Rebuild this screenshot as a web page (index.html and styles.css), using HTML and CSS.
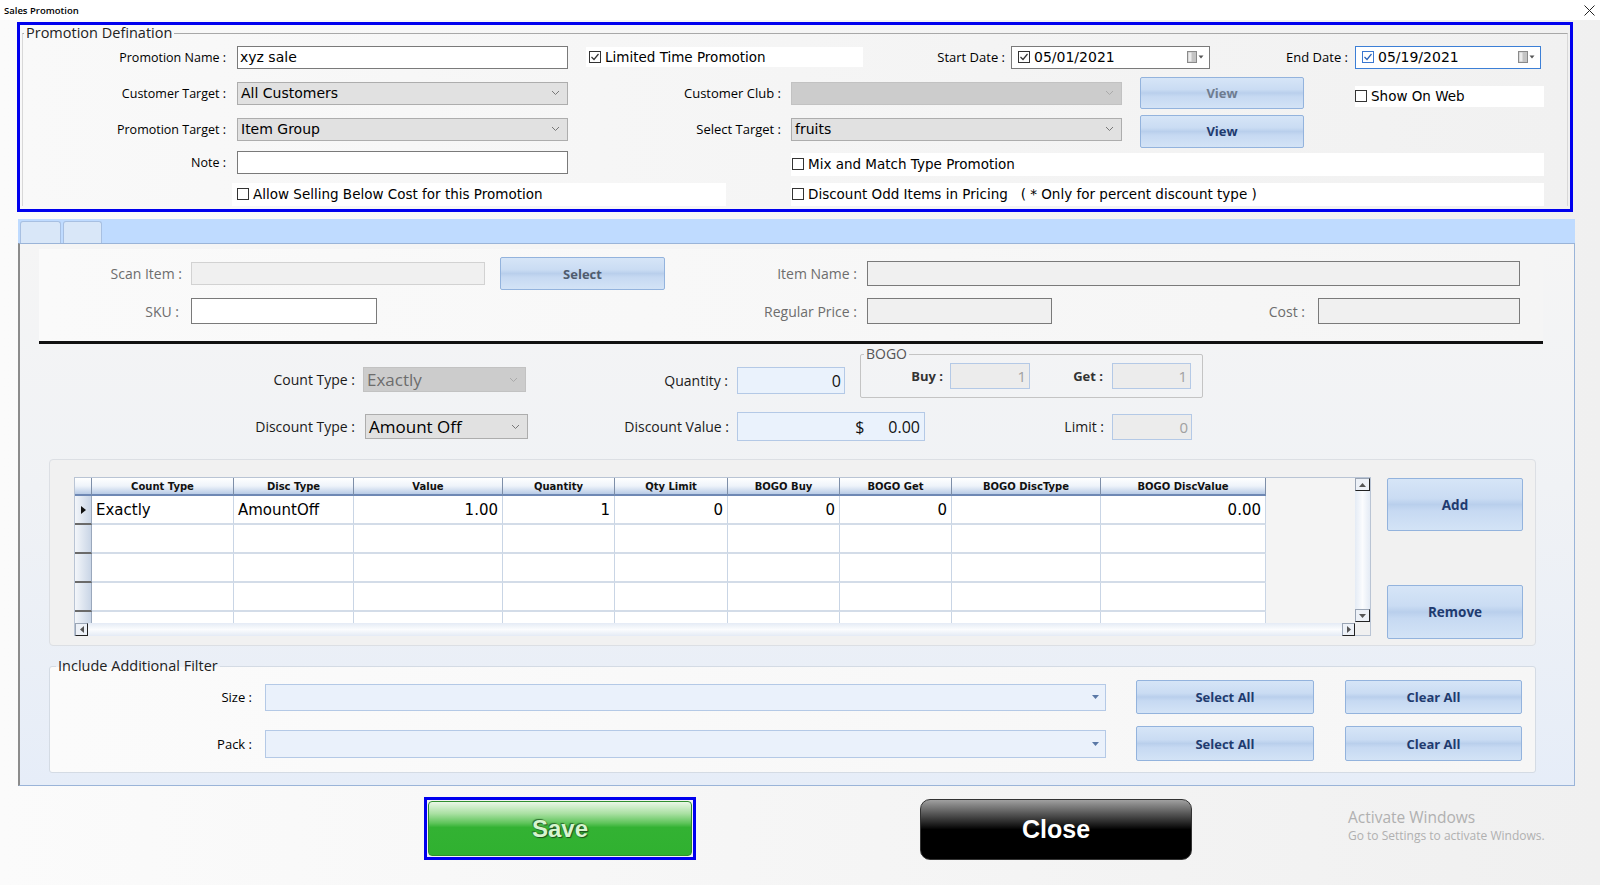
FILE: index.html
```html
<!DOCTYPE html>
<html lang="en">
<head>
    <meta charset="utf-8" />
    <meta name="viewport" content="width=device-width, initial-scale=1" />
    <title>Sales Promotion</title>
    <link rel="stylesheet" href="styles.css">
</head>
<body>
    <div class="titlebar">
        <span class="title">Sales Promotion</span>
        <svg class="close-x" width="11" height="11" viewBox="0 0 11 11"><path d="M0.5 0.5 L10.5 10.5 M10.5 0.5 L0.5 10.5" stroke="#222" stroke-width="1"/></svg>
    </div>

    <!-- promotion definition (has focus, so it gets the blue frame) -->
    <div class="focus-box">
        <fieldset class="def-group">
            <legend>Promotion Defination</legend>

            <div class="row r1">
                <span class="lbl lbl-a">Promotion Name :</span>
                <div class="textbox w-main ml7">xyz sale</div>
                <div class="check check-limited"><span class="box"><svg width="10" height="10" viewBox="0 0 10 10"><path d="M1.5 5 L4 7.5 L8.5 2" fill="none" stroke="#333" stroke-width="1.2"/></svg></span>Limited Time Promotion</div>
                <span class="lbl lbl-start">Start Date :</span>
                <div class="datebox date-start">
                    <span class="box"><svg width="10" height="10" viewBox="0 0 10 10"><path d="M1.5 5 L4 7.5 L8.5 2" fill="none" stroke="#333" stroke-width="1.2"/></svg></span>
                    <span class="date-text">05/01/2021</span>
                    <svg class="cal" width="17" height="12" viewBox="0 0 17 12"><rect x="0.5" y="0.5" width="9" height="11" fill="#c4c4c4" stroke="#8a8a8a"/><rect x="1.5" y="1.5" width="3" height="9" fill="#ececec"/><path d="M11.5 4.5 h5 l-2.5 3 z" fill="#555"/></svg>
                </div>
                <span class="lbl lbl-end">End Date :</span>
                <div class="datebox date-end">
                    <span class="box blue"><svg width="10" height="10" viewBox="0 0 10 10"><path d="M1.5 5 L4 7.5 L8.5 2" fill="none" stroke="#2a62b8" stroke-width="1.2"/></svg></span>
                    <span class="date-text">05/19/2021</span>
                    <svg class="cal" width="17" height="12" viewBox="0 0 17 12"><rect x="0.5" y="0.5" width="9" height="11" fill="#c4c4c4" stroke="#8a8a8a"/><rect x="1.5" y="1.5" width="3" height="9" fill="#ececec"/><path d="M11.5 4.5 h5 l-2.5 3 z" fill="#555"/></svg>
                </div>
            </div>

            <div class="row r2">
                <span class="lbl lbl-a">Customer Target :</span>
                <div class="combo w-main ml7"><span>All Customers</span><svg width="9" height="6" viewBox="0 0 9 6"><path d="M1 1 L4.5 4.5 L8 1" fill="none" stroke="#777"/></svg></div>
                <span class="lbl lbl-club">Customer Club :</span>
                <div class="combo off w-main ml10"><span></span><svg width="9" height="6" viewBox="0 0 9 6"><path d="M1 1 L4.5 4.5 L8 1" fill="none" stroke="#aaa"/></svg></div>
                <button class="btn btn-view dim">View</button>
                <div class="check check-web"><span class="box"></span>Show On Web</div>
            </div>

            <div class="row r3">
                <span class="lbl lbl-a">Promotion Target :</span>
                <div class="combo w-main ml7"><span>Item Group</span><svg width="9" height="6" viewBox="0 0 9 6"><path d="M1 1 L4.5 4.5 L8 1" fill="none" stroke="#777"/></svg></div>
                <span class="lbl lbl-club">Select Target :</span>
                <div class="combo w-main ml10"><span>fruits</span><svg width="9" height="6" viewBox="0 0 9 6"><path d="M1 1 L4.5 4.5 L8 1" fill="none" stroke="#777"/></svg></div>
                <button class="btn btn-view low">View</button>
            </div>

            <div class="row r4">
                <span class="lbl lbl-a">Note :</span>
                <div class="textbox w-main ml7"></div>
                <div class="check check-wide ml223 low"><span class="box"></span>Mix and Match Type Promotion</div>
            </div>

            <div class="row r5">
                <div class="check check-allow"><span class="box"></span>Allow Selling Below Cost for this Promotion</div>
                <div class="check check-wide ml65"><span class="box"></span>Discount Odd Items in Pricing&nbsp;&nbsp;&nbsp;( * Only for percent discount type )</div>
            </div>
        </fieldset>
    </div>

    <!-- item rules tab control -->
    <div class="tabs">
        <div class="tab-strip"><span class="tab"></span><span class="tab"></span></div>
        <div class="tab-page">
            <div class="scan-area">
                <div class="row ra">
                    <span class="lbl dim lbl-scan">Scan Item :</span>
                    <div class="textbox off w-scan"></div>
                    <button class="btn btn-select">Select</button>
                    <span class="lbl dim lbl-itemname">Item Name :</span>
                    <div class="textbox grey w-itemname"></div>
                </div>
                <div class="row rb">
                    <span class="lbl dim lbl-sku">SKU :</span>
                    <div class="textbox w-sku"></div>
                    <span class="lbl dim lbl-price">Regular Price :</span>
                    <div class="textbox grey w-price"></div>
                    <span class="lbl dim lbl-cost">Cost :</span>
                    <div class="textbox grey w-cost"></div>
                </div>
            </div>
            <div class="rule"></div>

            <div class="row rc">
                <div class="pair pair-ct">
                    <span class="lbl big lbl-ct">Count Type :</span>
                    <div class="combo off big w-ct"><span>Exactly</span><svg width="9" height="6" viewBox="0 0 9 6"><path d="M1 1 L4.5 4.5 L8 1" fill="none" stroke="#aaa"/></svg></div>
                </div>
                <div class="pair pair-qty">
                    <span class="lbl big lbl-qty">Quantity :</span>
                    <div class="numbox w-qty">0</div>
                </div>
                <fieldset class="bogo">
                    <legend>BOGO</legend>
                    <div class="row">
                        <span class="lbl bold lbl-buy">Buy :</span>
                        <div class="numbox off w-buy">1</div>
                        <span class="lbl bold lbl-get">Get :</span>
                        <div class="numbox off w-get">1</div>
                    </div>
                </fieldset>
            </div>

            <div class="row rd">
                <span class="lbl big lbl-ct">Discount Type :</span>
                <div class="combo big w-ct ml10"><span>Amount Off</span><svg width="9" height="6" viewBox="0 0 9 6"><path d="M1 1 L4.5 4.5 L8 1" fill="none" stroke="#777"/></svg></div>
                <span class="lbl big lbl-dv">Discount Value :</span>
                <div class="numbox w-dv"><span class="dollar">$</span><span>0.00</span></div>
                <span class="lbl big lbl-limit">Limit :</span>
                <div class="numbox off w-limit">0</div>
            </div>

            <div class="grid-panel">
                <div class="grid">
                    <div class="grid-main">
                        <div class="grid-cells">
                            <div class="gh"></div><div class="gh">Count Type</div><div class="gh">Disc Type</div><div class="gh">Value</div><div class="gh">Quantity</div><div class="gh">Qty Limit</div><div class="gh">BOGO Buy</div><div class="gh">BOGO Get</div><div class="gh">BOGO DiscType</div><div class="gh">BOGO DiscValue</div>

                            <div class="rh"><svg width="5" height="8" viewBox="0 0 5 8"><path d="M0 0 L5 4 L0 8 z" fill="#111"/></svg></div><div class="gc">Exactly</div><div class="gc">AmountOff</div><div class="gc num">1.00</div><div class="gc num">1</div><div class="gc num">0</div><div class="gc num">0</div><div class="gc num">0</div><div class="gc"></div><div class="gc num">0.00</div>

                            <div class="rh"></div><div class="gc"></div><div class="gc"></div><div class="gc"></div><div class="gc"></div><div class="gc"></div><div class="gc"></div><div class="gc"></div><div class="gc"></div><div class="gc"></div>
                            <div class="rh"></div><div class="gc"></div><div class="gc"></div><div class="gc"></div><div class="gc"></div><div class="gc"></div><div class="gc"></div><div class="gc"></div><div class="gc"></div><div class="gc"></div>
                            <div class="rh"></div><div class="gc"></div><div class="gc"></div><div class="gc"></div><div class="gc"></div><div class="gc"></div><div class="gc"></div><div class="gc"></div><div class="gc"></div><div class="gc"></div>
                            <div class="rh part"></div><div class="gc part"></div><div class="gc part"></div><div class="gc part"></div><div class="gc part"></div><div class="gc part"></div><div class="gc part"></div><div class="gc part"></div><div class="gc part"></div><div class="gc part"></div>
                        </div>
                        <div class="hscroll">
                            <span class="sbtn"><svg width="4" height="7" viewBox="0 0 4 7"><path d="M4 0 L0 3.5 L4 7 z" fill="#555"/></svg></span>
                            <span class="strack"></span>
                            <span class="sbtn"><svg width="4" height="7" viewBox="0 0 4 7"><path d="M0 0 L4 3.5 L0 7 z" fill="#555"/></svg></span>
                        </div>
                    </div>
                    <div class="vscroll">
                        <span class="sbtn"><svg width="7" height="4" viewBox="0 0 7 4"><path d="M0 4 L3.5 0 L7 4 z" fill="#555"/></svg></span>
                        <span class="strack"></span>
                        <span class="sbtn"><svg width="7" height="4" viewBox="0 0 7 4"><path d="M0 0 L3.5 4 L7 0 z" fill="#555"/></svg></span>
                        <span class="scorner"></span>
                    </div>
                </div>
                <div class="side-btns">
                    <button class="btn btn-add">Add</button>
                    <button class="btn btn-remove">Remove</button>
                </div>
            </div>

            <fieldset class="filter-group">
                <legend>Include Additional Filter</legend>
                <div class="row re">
                    <span class="lbl lbl-filter">Size :</span>
                    <div class="fcombo"><svg width="7" height="4" viewBox="0 0 7 4"><path d="M0 0 L7 0 L3.5 4 z" fill="#5a78a6"/></svg></div>
                    <button class="btn btn-all">Select All</button>
                    <button class="btn btn-clear">Clear All</button>
                </div>
                <div class="row rf">
                    <span class="lbl lbl-filter">Pack :</span>
                    <div class="fcombo"><svg width="7" height="4" viewBox="0 0 7 4"><path d="M0 0 L7 0 L3.5 4 z" fill="#5a78a6"/></svg></div>
                    <button class="btn btn-all">Select All</button>
                    <button class="btn btn-clear">Clear All</button>
                </div>
            </fieldset>
        </div>
    </div>

    <div class="bottom">
        <div class="save-focus"><button class="save">Save</button></div>
        <button class="close">Close</button>
        <div class="activate">
            <div class="act-title">Activate Windows</div>
            <div class="act-sub">Go to Settings to activate Windows.</div>
        </div>
    </div>
</body>
</html>
```

FILE: styles.css
```css
*{
    box-sizing:border-box;
}
body{
    margin:0;
    width:1600px;
    height:885px;
    overflow:hidden;
    font-family:"Open Sans", "Noto Sans", sans-serif;
    font-size:13px;
    color:#000;
    background:linear-gradient(90deg, #fbfbfb 0%, #f5f5f5 55%, #f0f0f0 100%);
}
svg{
    display:block;
}
.titlebar{
    height:20px;
    background:#fff;
    display:flex;
    align-items:center;
    justify-content:space-between;
    padding:0 5px 0 4px;
}
.title{
    font-size:9.5px;
    font-weight:600;
}

/* generic row of controls */
.row{
    display:flex;
    align-items:center;
}
.row > *, .pair > *{
    flex:none;
}
.pair{
    display:flex;
    align-items:center;
    flex:none;
}
.lbl{
    text-align:right;
    white-space:nowrap;
}
.lbl.dim{ color:#6d6d6d; font-size:14px; }
.lbl.big{ font-size:14px; color:#1a1a1a; }
.lbl.bold{ font-weight:700; font-size:13px; color:#333; }
.ml7{ margin-left:7px; }
.ml10{ margin-left:10px; }
.ml65{ margin-left:65px; }
.ml223{ margin-left:223px; }
.low{ margin-top:4px; }

.textbox{
    height:23px;
    background:#fff;
    border:1px solid #7a7a7a;
    font-family:"DejaVu Sans", sans-serif;
    font-size:14px;
    line-height:20px;
    padding-left:2px;
}
.textbox.off{ background:#f0f0f0; border-color:#d2d2d2; }
.textbox.grey{ background:#f0f0f0; border-color:#7a7a7a; }
.combo{
    height:23px;
    background:#e1e1e1;
    border:1px solid #adadad;
    display:flex;
    align-items:center;
    justify-content:space-between;
    padding:0 7px 0 3px;
    font-family:"DejaVu Sans", sans-serif;
    font-size:14px;
}
.combo.off{ background:#cccccc; border-color:#c2c2c2; color:#6d6d6d; }
.combo.big{ height:25px; font-family:"Open Sans", sans-serif; font-size:17px; }
.w-main{ width:331px; }

.check{
    height:21px;
    background:#fff;
    display:flex;
    align-items:center;
    font-family:"DejaVu Sans", sans-serif;
    font-size:13.5px;
    white-space:nowrap;
}
.box{
    width:12px;
    height:12px;
    border:1px solid #333;
    background:#fff;
    display:inline-flex;
    align-items:center;
    justify-content:center;
    margin-right:4px;
    flex:none;
}
.box.blue{ border-color:#3b78d0; }

/* blue focus frame */
.focus-box{
    margin:2px 0 0 17px;
    width:1556px;
    height:190px;
    border:3px solid #0000ee;
    background:linear-gradient(90deg, #f9f9f9 0%, #f1f1f1 100%);
}
.def-group{
    margin:0 0 0 2px;
    padding:0;
    width:1546px;
    border:1px solid #d8d8d8;
    border-top-color:#a8a8a8;
    border-bottom:none;
}
.def-group legend{
    font-size:14.5px;
    line-height:16px;
    padding:0 2px;
    margin-left:1px;
    color:#222;
}
.r1{ margin-top:3px; height:26px; }
.r2{ margin-top:6px; height:34px; }
.r3{ margin-top:2px; height:34px; }
.r4{ margin-top:4px; height:24px; }
.r5{ margin-top:8px; height:24px; }
.lbl-a{ width:207px; padding-right:4px; font-size:12.5px; }
.check-limited{ margin-left:18px; width:277px; padding-left:3px; height:20px; }
.lbl-start{ width:142px; }
.lbl-end{ width:138px; }
.datebox{
    height:23px;
    background:#fff;
    border:1px solid #7a7a7a;
    display:flex;
    align-items:center;
    padding:0 5px 0 6px;
    font-family:"DejaVu Sans", sans-serif;
    font-size:14px;
}
.datebox .date-text{ flex:1; }
.date-start{ margin-left:6px; width:199px; }
.date-end{ margin-left:7px; width:186px; border-color:#3c7fd6; }
.lbl-club{ width:213px; }
.btn{
    font-family:"Open Sans", sans-serif;
    font-weight:700;
    font-size:13px;
    color:#1f3b6f;
    border:1px solid #93b3dd;
    border-radius:2px;
    background:linear-gradient(180deg, #d6e5f7 0%, #cadcf3 38%, #b9cfec 50%, #c6d9f2 62%, #d3e3f6 100%);
    padding:0;
}
.btn-view{ margin-left:18px; width:164px; height:32px; }
.btn-view.low{ height:33px; }
.btn.dim{ color:#6e7c90; }
.check-web{ margin-left:51px; width:189px; margin-top:6px; }
.check-wide{ width:753px; height:23px; padding-left:1px; }
.check-allow{ margin-left:209px; width:494px; padding-left:5px; height:23px; }

/* tab control */
.tabs{
    margin:7px 0 0 18px;
    width:1557px;
}
.tab-strip{
    height:24px;
    background:#bfdbff;
    display:flex;
    align-items:flex-end;
    padding-left:2px;
    gap:2px;
}
.tab{
    width:41px;
    height:22px;
    border:1px solid #a8c0e2;
    border-bottom:none;
    border-radius:3px 3px 0 0;
    background:#d9e7f8;
}
.tab + .tab{ width:39px; }
.tab-page{
    height:543px;
    border:1px solid #9ab4d8;
    border-left:2px solid #8c8c8c;
    padding-left:19px;
    background:linear-gradient(180deg, #f5f5f5 0%, #f0f2f5 45%, #e6edf8 100%);
}
.scan-area{
    margin-top:5px;
    width:1504px;
    padding:8px 0 17px;
    background:linear-gradient(90deg, #fafafa 0%, #f5f5f5 100%);
}
.ra{ height:33px; }
.rb{ margin-top:8px; height:26px; }
.lbl-scan{ width:143px; }
.w-scan{ margin-left:9px; width:294px; }
.btn-select{ margin-left:15px; width:165px; height:33px; color:#4f5c6e; }
.lbl-itemname{ width:192px; }
.w-itemname{ margin-left:10px; width:653px; height:25px; }
.lbl-sku{ width:140px; }
.w-sku{ margin-left:12px; width:186px; height:26px; }
.lbl-price{ width:480px; }
.w-price{ margin-left:10px; width:185px; height:26px; }
.lbl-cost{ width:253px; }
.w-cost{ margin-left:13px; width:202px; height:26px; }
.rule{
    width:1504px;
    height:3px;
    background:#111;
}

.rc{ margin-top:2px; height:52px; align-items:flex-start; }
.pair-ct, .pair-qty{ margin-top:21px; }
.lbl-ct{ width:316px; }
.w-ct{ width:163px; }
.pair-ct .combo{ margin-left:8px; }
.lbl-qty{ width:202px; }
.numbox{
    height:27px;
    background:#eaf2fc;
    border:1px solid #b4c9e6;
    display:flex;
    align-items:center;
    justify-content:flex-end;
    padding-right:3px;
    font-size:16px;
    color:#111;
}
.numbox.off{ background:#ececec; color:#a0a0a0; font-size:15px; height:26px; }
.w-qty{ margin-left:9px; width:108px; }
.bogo{
    margin:0 0 0 15px;
    padding:0;
    width:343px;
    height:52px;
    border:1px solid #c4c4c4;
    border-radius:2px;
}
.bogo legend{
    font-size:14px;
    line-height:16px;
    color:#555;
    padding:0 2px;
    margin-left:3px;
}
.bogo .row{ margin-top:1px; }
.lbl-buy{ width:82px; }
.w-buy{ margin-left:7px; width:80px; }
.lbl-get{ width:73px; }
.w-get{ margin-left:9px; width:79px; }

.rd{ margin-top:14px; height:29px; }
.lbl-dv{ width:201px; }
.w-dv{ margin-left:8px; width:188px; height:29px; justify-content:space-between; padding:0 4px 0 0; }
.w-dv .dollar{ margin-left:auto; margin-right:24px; }
.lbl-limit{ width:179px; }
.w-limit{ margin-left:8px; width:80px; height:29px; }

/* grid block */
.grid-panel{
    margin:18px 0 0 10px;
    width:1487px;
    height:187px;
    padding:17px 0 0 24px;
    display:flex;
    align-items:flex-start;
    background:#f1f1f1;
    border:1px solid #dcdfe4;
    border-radius:4px;
}
.grid{
    width:1297px;
    height:159px;
    display:flex;
    border:1px solid #b9c4d4;
    background:#f4f4f4;
    flex:none;
}
.grid-main{
    width:1280px;
    display:flex;
    flex-direction:column;
}
.grid-cells{
    display:grid;
    grid-template-columns:17px 142px 120px 149px 112px 113px 112px 112px 149px 165px;
    grid-template-rows:18px 29px 29px 29px 29px 11px;
    width:1191px;
}
.gh{
    font-family:"DejaVu Sans", sans-serif;
    font-weight:700;
    font-size:10px;
    color:#111;
    display:flex;
    align-items:center;
    justify-content:center;
    background:linear-gradient(180deg, #ffffff 0%, #eef3fa 50%, #b8cbe6 100%);
    border-right:1px solid #7d8ea8;
    border-bottom:2px solid #6e88b4;
}
.rh{
    background:linear-gradient(90deg, #f3f6fa 0%, #c9d5e6 100%);
    border-bottom:2px solid #6a6a6a;
    border-right:1px solid #9aa8bc;
    display:flex;
    align-items:center;
    justify-content:center;
}
.gc{
    background:#fff;
    border-right:1px solid #c9d5e5;
    border-bottom:2px solid #d3dce8;
    font-family:"DejaVu Sans", sans-serif;
    font-size:15px;
    display:flex;
    align-items:center;
    padding:0 4px;
}
.gc.num{ justify-content:flex-end; }
.part{ border-bottom:none; }
.hscroll{
    height:13px;
    display:flex;
    background:linear-gradient(180deg, #e4ebf5 0%, #fbfcfe 50%, #e4ebf5 100%);
}
.sbtn{
    width:13px;
    height:13px;
    display:flex;
    align-items:center;
    justify-content:center;
    background:#edf1f7;
    border:1px solid #9aa5b5;
    border-right-color:#222;
    border-bottom-color:#222;
    flex:none;
}
.strack{ flex:1; }
.vscroll{
    width:15px;
    display:flex;
    flex-direction:column;
    background:linear-gradient(90deg, #e4ebf5 0%, #fbfcfe 50%, #e4ebf5 100%);
}
.vscroll .sbtn{ width:15px; }
.scorner{ height:13px; background:#f0f0f0; flex:none; }
.side-btns{
    margin-left:16px;
    width:136px;
    display:flex;
    flex-direction:column;
}
.btn-add{ margin-top:1px; height:53px; font-size:13.5px; }
.btn-remove{ margin-top:54px; height:54px; font-size:13.5px; }

/* filter group */
.filter-group{
    margin:12px 0 0 10px;
    padding:0;
    width:1487px;
    height:115px;
    border:1px solid #d4dbe4;
    border-radius:3px;
    background:linear-gradient(90deg, #fbfbfb 0%, #f6f6f6 100%);
}
.filter-group legend{
    font-size:14.5px;
    line-height:16px;
    padding:0 2px;
    margin-left:6px;
    color:#222;
}
.re{ margin-top:6px; height:34px; }
.rf{ margin-top:12px; height:35px; }
.lbl-filter{ width:202px; }
.fcombo{
    margin-left:13px;
    width:841px;
    height:27px;
    background:#eaf1fb;
    border:1px solid #b4c9e6;
    display:flex;
    align-items:center;
    justify-content:flex-end;
    padding-right:6px;
}
.rf .fcombo{ height:28px; }
.btn-all{ margin-left:30px; width:178px; height:34px; }
.btn-clear{ margin-left:31px; width:177px; height:34px; }
.rf .btn{ height:35px; }

/* save / close */
.bottom{
    margin-top:11px;
    display:flex;
    align-items:flex-start;
}
.save-focus{
    margin-left:424px;
    width:272px;
    height:63px;
    border:3px solid #0000ee;
    padding:1px;
    background:#f4f4f4;
}
.save{
    width:100%;
    height:100%;
    border:1px solid #2f8f2f;
    border-radius:4px;
    background:linear-gradient(180deg, #eaf7e6 0%, #a9e0a2 22%, #5ec45a 40%, #33b233 48%, #30b130 100%);
    font-family:"Liberation Sans", Arial, sans-serif;
    font-weight:700;
    font-size:24px;
    color:#d6f5cf;
    text-shadow:1px 1px 1px #1d4f1d, -1px -1px 1px #2a6a2a;
}
.close{
    margin:2px 0 0 224px;
    width:272px;
    height:61px;
    border:1px solid #333;
    border-radius:10px;
    background:linear-gradient(180deg, #a0a0a0 0%, #5a5a5a 22%, #151515 44%, #000 50%, #000 100%);
    font-family:"Liberation Sans", Arial, sans-serif;
    font-weight:700;
    font-size:25px;
    color:#fff;
}
.activate{
    margin:10px 0 0 156px;
    color:#b0b0b0;
}
.act-title{ font-size:15.5px; line-height:20px; }
.act-sub{ font-size:12px; line-height:18px; }
```
